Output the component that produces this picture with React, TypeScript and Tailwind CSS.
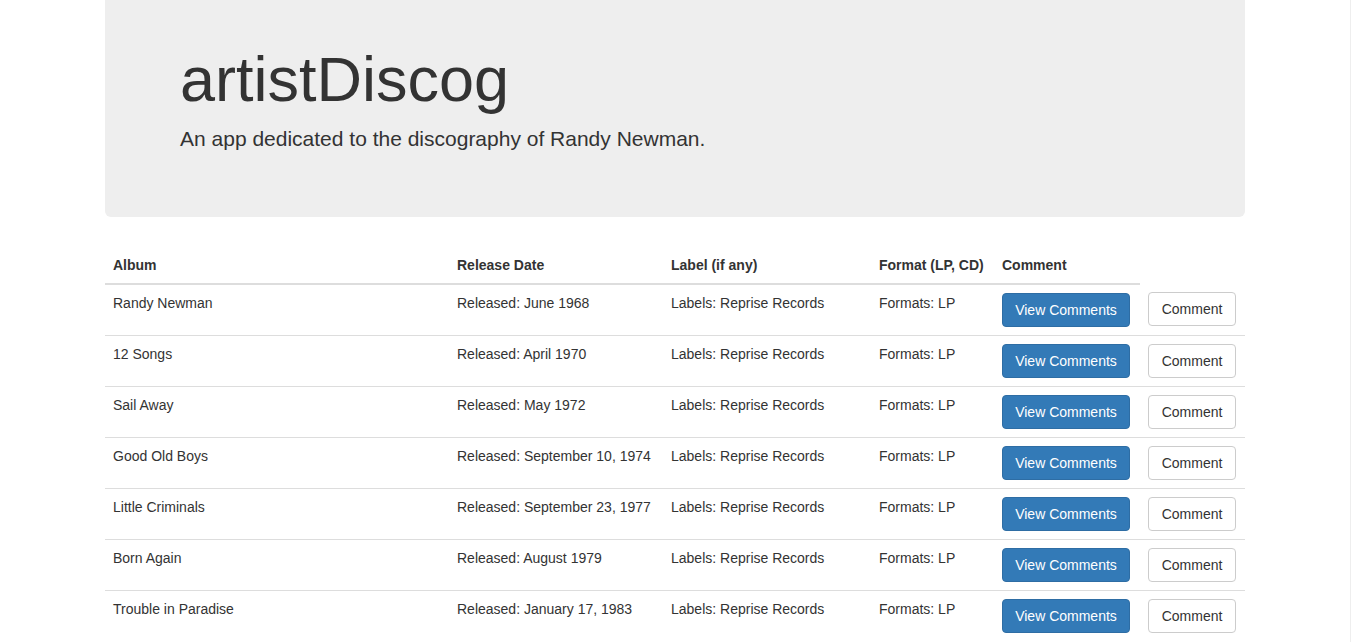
import React from 'react';

const albums = [
  { title: 'Randy Newman', released: 'June 1968' },
  { title: '12 Songs', released: 'April 1970' },
  { title: 'Sail Away', released: 'May 1972' },
  { title: 'Good Old Boys', released: 'September 10, 1974' },
  { title: 'Little Criminals', released: 'September 23, 1977' },
  { title: 'Born Again', released: 'August 1979' },
  { title: 'Trouble in Paradise', released: 'January 17, 1983' },
];

export default function App() {
  return (
    <div className="flex min-h-screen bg-white font-['Liberation_Sans',Arial,sans-serif] text-[14px] leading-[20px] text-[#333]">
      <div className="flex-1 px-[15px]">
        <div className="mx-auto w-[1140px]">
          {/* Jumbotron */}
          <div className="mb-[30px] rounded-b-[6px] bg-[#eeeeee] px-[75px] pt-[25px] pb-[48px]">
            <h1 className="mt-[20px] mb-[10px] text-[63px] leading-[69px] font-normal">artistDiscog</h1>
            <p className="mb-[15px] text-[21px] leading-[30px] font-light">
              An app dedicated to the discography of Randy Newman.
            </p>
          </div>

          {/* Albums table */}
          <table className="w-full table-fixed border-collapse">
            <colgroup>
              <col className="w-[344px]" />
              <col className="w-[214px]" />
              <col className="w-[208px]" />
              <col className="w-[123px]" />
              <col className="w-[146px]" />
              <col className="w-[105px]" />
            </colgroup>
            <thead>
              <tr>
                <th className="border-b-2 border-[#ddd] p-[8px] text-left font-bold">Album</th>
                <th className="border-b-2 border-[#ddd] p-[8px] text-left font-bold">Release Date</th>
                <th className="border-b-2 border-[#ddd] p-[8px] text-left font-bold">Label (if any)</th>
                <th className="border-b-2 border-[#ddd] p-[8px] text-left font-bold">Format (LP, CD)</th>
                <th className="border-b-2 border-[#ddd] p-[8px] text-left font-bold">Comment</th>
              </tr>
            </thead>
            <tbody>
              {albums.map((a) => (
                <tr key={a.title} className="border-t border-[#ddd] first:border-t-0">
                  <td className="p-[8px] align-top">{a.title}</td>
                  <td className="p-[8px] align-top whitespace-nowrap">Released: {a.released}</td>
                  <td className="p-[8px] align-top">Labels: Reprise Records</td>
                  <td className="p-[8px] align-top">Formats: LP</td>
                  <td className="p-[8px] align-top">
                    <button className="w-[128px] rounded-[4px] border border-[#2e6da4] bg-[#337ab7] py-[6px] text-[14px] leading-[20px] text-white">
                      View Comments
                    </button>
                  </td>
                  <td className="p-[8px] align-top">
                    <button className="w-[88px] rounded-[4px] border border-[#ccc] bg-white py-[6px] text-[14px] leading-[20px] text-[#333]">
                      Comment
                    </button>
                  </td>
                </tr>
              ))}
            </tbody>
          </table>
        </div>
      </div>
      <div className="w-[1px] bg-[#eeeeee]" />
    </div>
  );
}
